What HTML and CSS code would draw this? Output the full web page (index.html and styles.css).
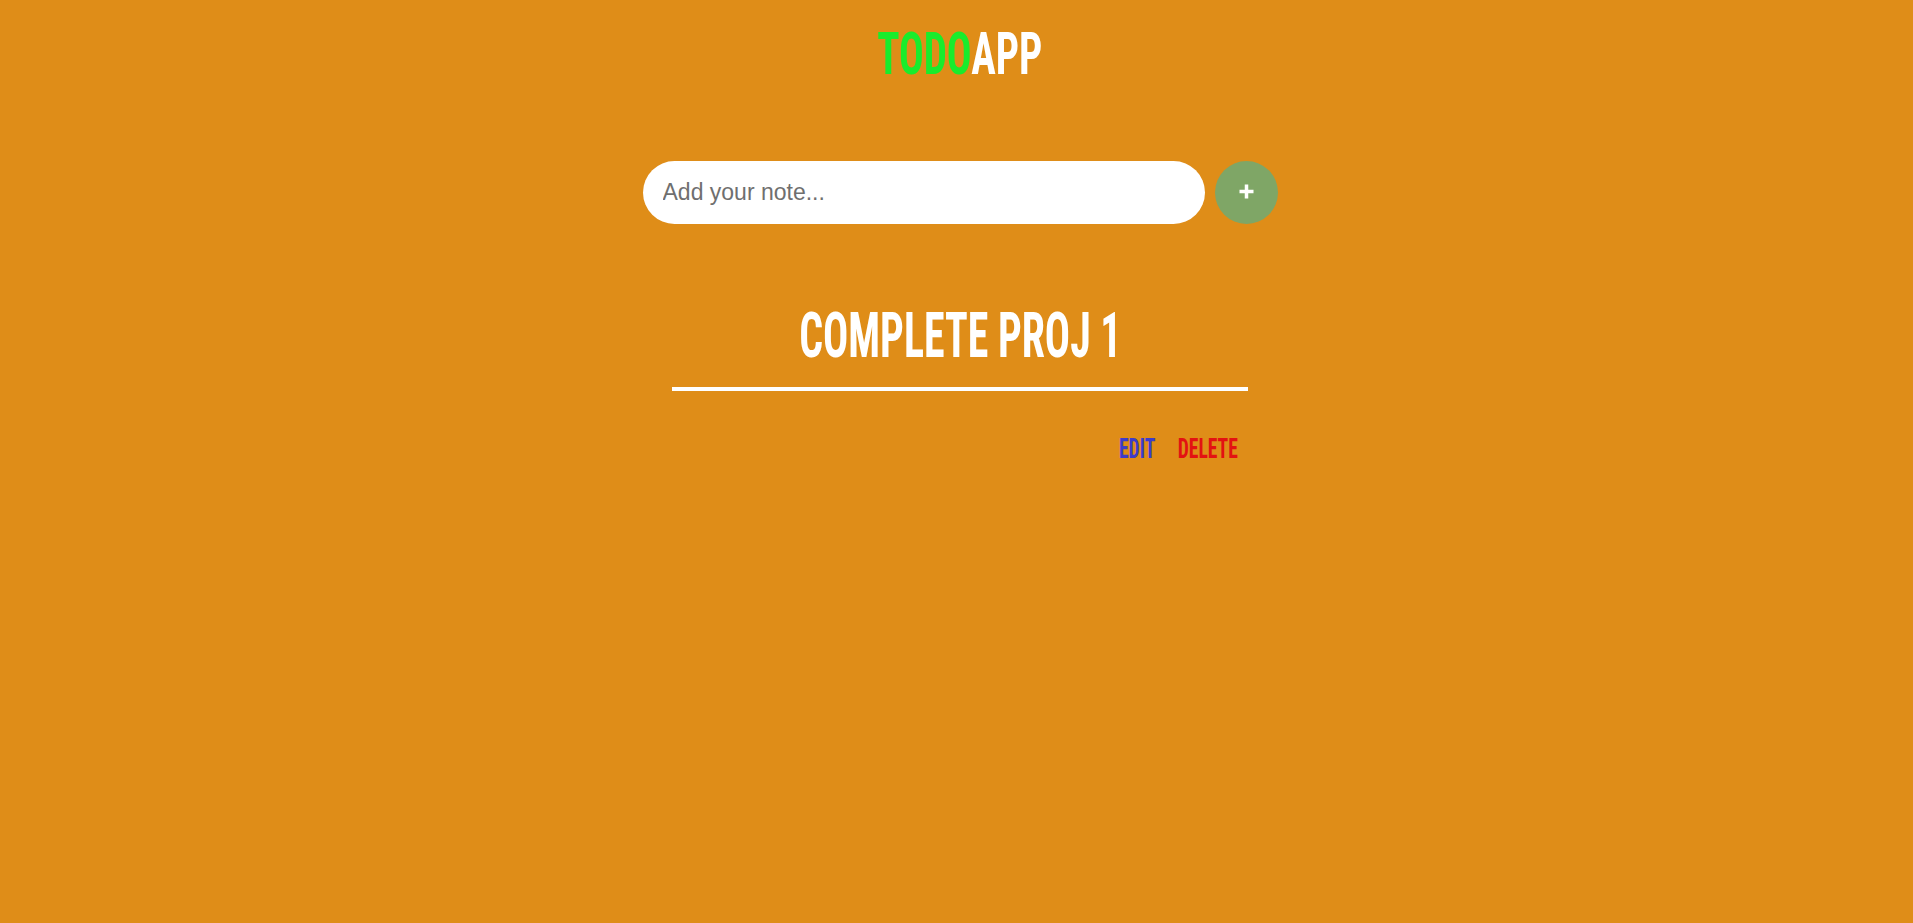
FILE: index.html
```html
<!DOCTYPE html>
<html lang="en">
<head>
<meta charset="utf-8">
<title>TodoApp</title>
<link rel="stylesheet" href="styles.css">
</head>
<body>
<main class="app">
  <h1 class="brand"><span class="squeeze"><span class="brand-todo">TODO</span>APP</span></h1>
  <form class="add-form">
    <input class="note-input" type="text" placeholder="Add your note...">
    <button class="add-btn" type="button" aria-label="Add">
      <svg width="15" height="15" viewBox="0 0 15 15"><path d="M7.5 0.5v14M0.5 7.5h14" stroke="#fff" stroke-width="3.5" fill="none"/></svg>
    </button>
  </form>
  <ul class="todo-list">
    <li class="todo-item">
      <h2 class="todo-title"><span class="squeeze squeeze-title">COMPLETE PROJ 1</span></h2>
      <div class="todo-actions">
        <span class="actions-group">
          <button class="act act-edit" type="button">EDIT</button>
          <button class="act act-delete" type="button">DELETE</button>
        </span>
      </div>
    </li>
  </ul>
</main>
</body>
</html>
```
FILE: styles.css
```css
html, body {
  margin: 0;
  padding: 0;
}
body {
  background: #df8d18;
  min-height: 923px;
  padding-left: 7px;
  font-family: "Roboto Condensed", "Liberation Sans", sans-serif;
}
.app {
  display: flex;
  flex-direction: column;
  align-items: center;
}
.squeeze {
  display: inline-block;
  transform: scaleX(0.695);
  transform-origin: center;
  white-space: nowrap;
}
.brand {
  margin: 24px 0 0;
  font-size: 59px;
  line-height: 59px;
  font-weight: 700;
  color: #fff;
  letter-spacing: 0;
}
.brand-todo {
  color: #19ec2c;
}
.add-form {
  margin-top: 78px;
  display: flex;
  gap: 10px;
  align-items: center;
}
.note-input {
  box-sizing: border-box;
  width: 562px;
  height: 63px;
  border: none;
  border-radius: 32px;
  background: #fff;
  padding: 0 20px;
  font-family: "Liberation Sans", Arial, sans-serif;
  font-size: 23px;
  color: #333;
  outline: none;
}
.note-input::placeholder {
  color: #6f6f6f;
}
.add-btn {
  width: 63px;
  height: 63px;
  border: none;
  border-radius: 50%;
  background: #7fa666;
  padding: 0;
  display: flex;
  align-items: center;
  justify-content: center;
}
.add-btn svg {
  display: block;
  margin-top: -2px;
}
.todo-list {
  list-style: none;
  margin: 80px 0 0;
  padding: 0;
  width: 576px;
}
.todo-item {
  display: flex;
  flex-direction: column;
}
.todo-title {
  margin: 0;
  text-align: center;
  font-size: 63px;
  line-height: 63px;
  font-weight: 700;
  color: #fff;
  padding-bottom: 20px;
  border-bottom: 4px solid #fff;
}
.squeeze-title {
  transform: scaleX(0.665);
}
.todo-actions {
  margin-top: 44px;
  display: flex;
  justify-content: flex-end;
  padding-right: 10px;
}
.actions-group {
  display: inline-flex;
  gap: 32px;
  transform: scaleX(0.7);
  transform-origin: right center;
}
.act {
  border: none;
  background: none;
  padding: 0;
  font-family: "Roboto Condensed", "Liberation Sans", sans-serif;
  font-size: 28px;
  line-height: 28px;
  font-weight: 700;
}
.act-edit {
  color: #3d3cc9;
}
.act-delete {
  color: #e31212;
}
```
